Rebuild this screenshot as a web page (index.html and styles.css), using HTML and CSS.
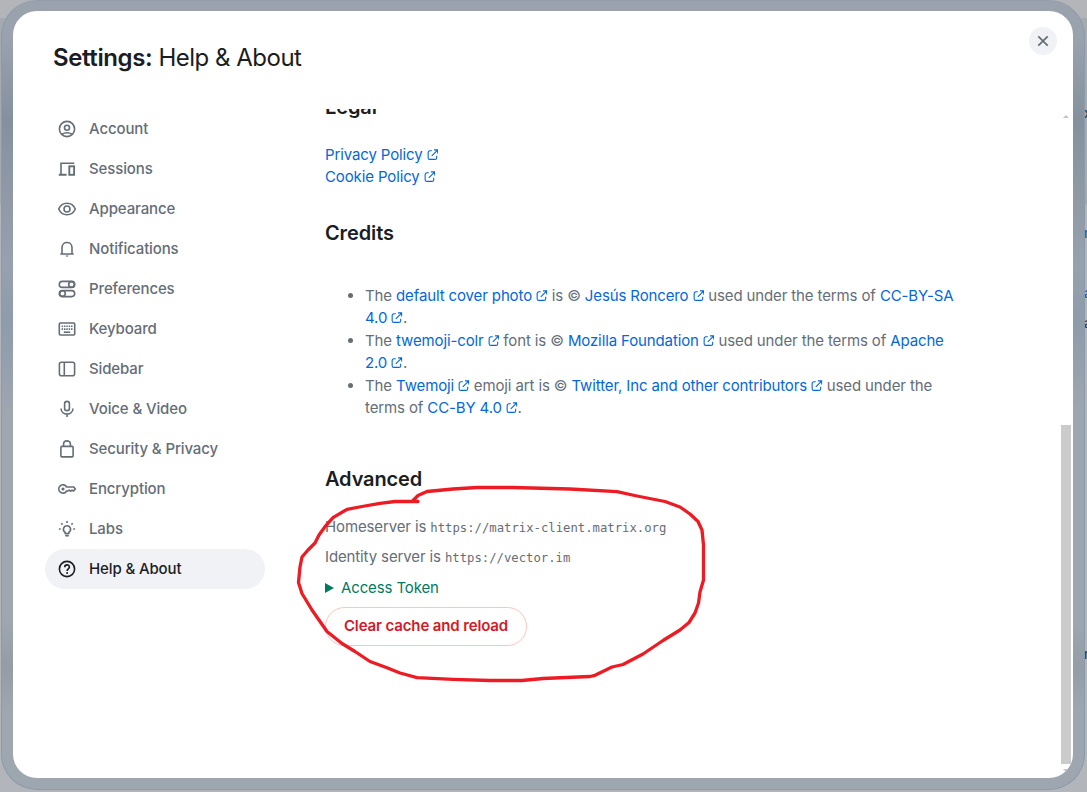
FILE: index.html
```
<!DOCTYPE html>
<html lang="en">
<head>
<meta charset="utf-8">
<title>Settings: Help &amp; About</title>
<link rel="stylesheet" href="styles.css">
</head>
<body>
<svg class="defs" aria-hidden="true">
  <symbol id="ext" viewBox="0 0 12 12"><path d="M5 1.900H3A1.800 1.800 0 0 0 1.200 3.700V9A1.800 1.800 0 0 0 3 10.800H8.300A1.800 1.800 0 0 0 10.100 9V7M7.300.9H11.200V4.800M11 1.100 5 7.100" fill="none" stroke="currentColor" stroke-width="1.150"/></symbol>
</svg>
<div class="backdrop">
  <span class="peek peek-dark" style="top:106px">x</span>
  <span class="peek peek-link" style="top:226px">n</span>
  <span class="peek peek-link" style="top:286px">a</span>
  <span class="peek peek-dark" style="top:316px">a</span>
  <span class="peek peek-dark" style="top:647px">n</span>
</div>
<div class="frame">
  <main class="dialog">
    <header class="header">
      <h1 class="title"><b>Settings:</b> Help &amp; About</h1>
      <button class="close" aria-label="Close"><svg width="12" height="12" viewBox="0 0 12 12"><path d="M1.300 1.300 10.700 10.700M10.700 1.300 1.300 10.700"/></svg></button>
    </header>
    <div class="columns">
      <nav class="nav">
        <a class="item"><svg class="icon" viewBox="0 0 20 20"><circle cx="10" cy="10" r="7.600"/><circle cx="10" cy="8.800" r="2.500"/><path d="M5 15.300C7.500 13.200 12.500 13.200 15 15.300"/></svg>Account</a>
        <a class="item"><svg class="icon" viewBox="0 0 20 20"><path d="M17.300 4.200H4V15.300"/><path d="M1.800 15.700H9.600" stroke-width="2"/><rect x="12.300" y="7.300" width="4.800" height="8.500" stroke-width="1.900"/></svg>Sessions</a>
        <a class="item"><svg class="icon" viewBox="0 0 20 20"><path d="M1.700 10C5 2.400 15 2.400 18.300 10C15 17.600 5 17.600 1.700 10Z"/><circle cx="10" cy="10" r="3"/></svg>Appearance</a>
        <a class="item"><svg class="icon" viewBox="0 0 20 20"><path d="M3.300 15H16.700M5 15V8.600C5 1.800 15 1.800 15 8.600V15"/><path class="solid" d="M8.300 16.500H11.700Q10 19.200 8.300 16.500Z"/></svg>Notifications</a>
        <a class="item"><svg class="icon" viewBox="0 0 20 20"><rect x="2.300" y="2.400" width="15.400" height="6" rx="3"/><circle cx="14.500" cy="5.400" r="2.800"/><rect x="2.300" y="11.600" width="15.400" height="6" rx="3"/><circle cx="5.500" cy="14.600" r="2.800"/></svg>Preferences</a>
        <a class="item"><svg class="icon" viewBox="0 0 20 20"><rect x="2.300" y="4" width="15.400" height="12" rx="1"/><path d="M4.600 7.300H15.600M4.600 10.100H15.600" stroke-dasharray="1.500 .85"/><path d="M6.800 13.200H13.200"/></svg>Keyboard</a>
        <a class="item"><svg class="icon" viewBox="0 0 20 20"><rect x="2.400" y="3.200" width="15.200" height="13.600" rx="2"/><path d="M7.300 3.200V16.800"/></svg>Sidebar</a>
        <a class="item"><svg class="icon" viewBox="0 0 20 20"><rect x="7.600" y="2.400" width="4.800" height="9.200" rx="2.400"/><path d="M4.100 9.500C4.100 17 15.900 17 15.900 9.500M10 15V18"/></svg>Voice &amp; Video</a>
        <a class="item"><svg class="icon" viewBox="0 0 20 20"><rect x="3.900" y="7.400" width="12.200" height="10.500" rx="1"/><path d="M6.600 7.400V5C6.600.8 13.400.8 13.400 5V7.400"/></svg>Security &amp; Privacy</a>
        <a class="item"><svg class="icon" viewBox="0 0 20 20"><path d="M9.600 8H16.800L18.300 10 16.500 12 15 11.200 13.700 12.200 12.200 11.200 11 12H9.600A4.200 4.200 0 1 1 9.600 8Z"/><circle class="solid" cx="6" cy="10" r="1.600"/></svg>Encryption</a>
        <a class="item"><svg class="icon" viewBox="0 0 20 20"><path d="M8.200 13.400C4.800 11 6.700 6.800 10 6.800S15.200 11 11.800 13.400V14.500H8.200ZM8.200 16.600H11.800M10 2V4M4.300 4.300 5.600 5.600M15.700 4.300 14.400 5.600M1.900 10H3.700M16.300 10H18.100"/></svg>Labs</a>
        <a class="item active"><svg class="icon" viewBox="0 0 20 20"><circle cx="10" cy="10" r="7.600"/><path d="M7.700 8.200C7.700 5.100 12.400 5.200 12.400 8C12.400 9.800 10.100 9.900 10.100 12"/><circle class="solid" cx="10.100" cy="14" r="1"/></svg>Help &amp; About</a>
      </nav>
      <section class="pane">
        <h2 class="heading legal">Legal</h2>
        <div class="links">
          <div><a class="link">Privacy Policy<svg class="ext"><use href="#ext"/></svg></a></div>
          <div><a class="link">Cookie Policy<svg class="ext"><use href="#ext"/></svg></a></div>
        </div>
        <h2 class="heading">Credits</h2>
        <ul class="credits">
          <li>The <a class="link">default cover photo<svg class="ext"><use href="#ext"/></svg></a> is © <a class="link">Jesús Roncero<svg class="ext"><use href="#ext"/></svg></a> used under the terms of <a class="link">CC-BY-SA<br>4.0<svg class="ext"><use href="#ext"/></svg></a>.</li>
          <li>The <a class="link">twemoji-colr<svg class="ext"><use href="#ext"/></svg></a> font is © <a class="link">Mozilla Foundation<svg class="ext"><use href="#ext"/></svg></a> used under the terms of <a class="link">Apache<br>2.0<svg class="ext"><use href="#ext"/></svg></a>.</li>
          <li>The <a class="link">Twemoji<svg class="ext"><use href="#ext"/></svg></a> emoji art is © <a class="link">Twitter, Inc and other contributors<svg class="ext"><use href="#ext"/></svg></a> used under the<br>terms of <a class="link">CC-BY 4.0<svg class="ext"><use href="#ext"/></svg></a>.</li>
        </ul>
        <h2 class="heading">Advanced</h2>
        <div class="advanced">
          <p class="server">Homeserver is <code>https://matrix-client.matrix.org</code></p>
          <p class="server">Identity server is <code>https://vector.im</code></p>
          <div class="token"><svg width="9" height="10" viewBox="0 0 9 10"><path d="M0 0 9 5 0 10Z" fill="currentColor"/></svg>Access Token</div>
          <button class="clear">Clear cache and reload</button>
        </div>
      </section>
      <div class="scrollbar">
        <svg class="arrow" viewBox="0 0 6 3"><path d="M0 3 3 0 6 3Z"/></svg>
        <div class="thumb"></div>
        <svg class="arrow" viewBox="0 0 6 3"><path d="M0 0 3 3 6 0Z"/></svg>
      </div>
    </div>
  </main>
</div>
<svg class="scribble" width="1087" height="792" viewBox="0 0 1087 792"><path d="M418 501.500 395 501.500 380 503.300 362 506.500 347 509.300 333 517.700 325 526.700 319 535 315 543 308 550 302 557 300 567 298.500 582.500 302 593.500 312 610 327 631.500 342 643.500 355 651.500 370 661.500 387 667.700 400 673 417 677.700 453 679.300 490 680.500 522 680.500 543 678.500 590 676.500 595 675.300 612 667 623 664.500 643 654 663 640.500 680 630 689 622.500 695 613 698.500 603 700 592 703.500 580 703.500 545 702 530 698 521.500 690 514 680 507 665 501.500 637 496 617 491.700 570 489 513 487.500 477 487.500 453 489 427 491.500 418 495.500 412.500 501"/></svg>
</body>
</html>
```
FILE: styles.css
```
* { box-sizing: border-box; }
body {
  margin: 0;
  width: 1087px;
  height: 792px;
  overflow: hidden;
  position: relative;
  background: linear-gradient(#b3b5b9 0 18px, #a5aab0 18px 204px, #b2b5ba 205px);
  font: 400 15px/22.5px Inter, sans-serif;
  letter-spacing: -0.125px;
  color: #656d77;
}
.defs { position: absolute; width: 0; height: 0; }
.backdrop { position: absolute; inset: 0; overflow: hidden; }
.peek { position: absolute; left: 1084px; line-height: 14px; font-size: 14px; }
.peek-dark { color: #2b2d32; }
.peek-link { color: #0b50ad; }
.frame {
  position: relative;
  width: 1084px;
  height: 790px;
  margin-left: 1px;
  padding: 10px 11px 11px;
  border: 1px solid #8c9aad;
  border-top-color: #939eac;
  border-radius: 36px;
  background: linear-gradient(#9aa2ad 0, #9aa2ad 35px, #84919c 120px, #8f9aa5 195px, #98a1ae 265px, #8e9ba9 320px, #9ea6b0 410px, #9ea6b0 620px, #949ca6 666px, #9ea6b0 710px);
}
.dialog {
  height: 767px;
  width: 1060px;
  border-radius: 24px;
  background: #fff;
  overflow: hidden;
  display: flex;
  flex-direction: column;
}
.header {
  height: 98px;
  flex: none;
  display: flex;
  justify-content: space-between;
  padding: 16px 16px 0 40px;
}
.title { margin: 14px 0 0; font-size: 24px; line-height: 34px; font-weight: 400; color: #1b1d22; letter-spacing: -0.5px; }
.title b { font-weight: 600; letter-spacing: -0.4px; }
.close {
  width: 28px;
  height: 28px;
  padding: 0;
  border: 0;
  border-radius: 50%;
  background: #f0f2f5;
  display: grid;
  place-items: center;
}
.close path { stroke: #656d77; stroke-width: 1.7; }
.columns { flex: 1; min-height: 0; display: flex; }
.nav { width: 252px; padding-left: 32px; flex: none; }
.item {
  display: flex;
  align-items: center;
  gap: 12px;
  height: 40px;
  padding: 0 12px;
  border-radius: 20px;
  font-weight: 500;
}
.item.active { background: #f0f2f5; color: #1b1d22; }
.icon { width: 20px; height: 20px; flex: none; fill: none; stroke: currentColor; stroke-width: 1.6; }
.icon .solid { fill: currentColor; stroke: none; }
.pane { flex: 1; padding-left: 60px; overflow: hidden; }
.heading { margin: 0; font-size: 20px; line-height: 30px; font-weight: 600; color: #1b1d22; }
.legal { margin-top: -17px; }
.links { padding: 22px 0 30px; line-height: 22px; }
.link { color: #0467dd; }
.ext { width: 11.5px; height: 11.5px; margin-left: 4.2px; vertical-align: -0.5px; }
.credits { margin: 0; padding: 37px 0 44px 40px; }
.credits li { line-height: 22px; padding-bottom: 1px; }
.advanced { padding-top: 22px; display: flex; flex-direction: column; align-items: flex-start; }
.server { margin: 0 0 8px; line-height: 22px; }
.server code { font: 12.25px "DejaVu Sans Mono", monospace; letter-spacing: 0; }
.server + .token { padding-top: 1px; }
.token { display: flex; align-items: center; gap: 7px; color: #007a61; margin-bottom: 7px; }
.clear {
  height: 39px;
  width: 202px;
  padding: 0;
  border: 1px solid #ffc5bc;
  border-radius: 20px;
  background: #fff;
  color: #d51928;
  font: 600 15px/22px Inter, sans-serif;
  letter-spacing: -0.13px;
}
.scrollbar {
  width: 14px;
  padding: 6px 2px 0;
  display: flex;
  flex-direction: column;
  align-items: center;
}
.arrow { width: 6px; height: 3px; fill: #c4c4c4; flex: none; }
.thumb { width: 10px; height: 339px; margin: 307px 0 5px; background: #cbcbcb; flex: none; }
.scribble { position: absolute; left: 0; top: 0; pointer-events: none; }
.scribble path { fill: none; stroke: #ed1c24; stroke-width: 3.3; stroke-linejoin: round; stroke-linecap: round; }
```
